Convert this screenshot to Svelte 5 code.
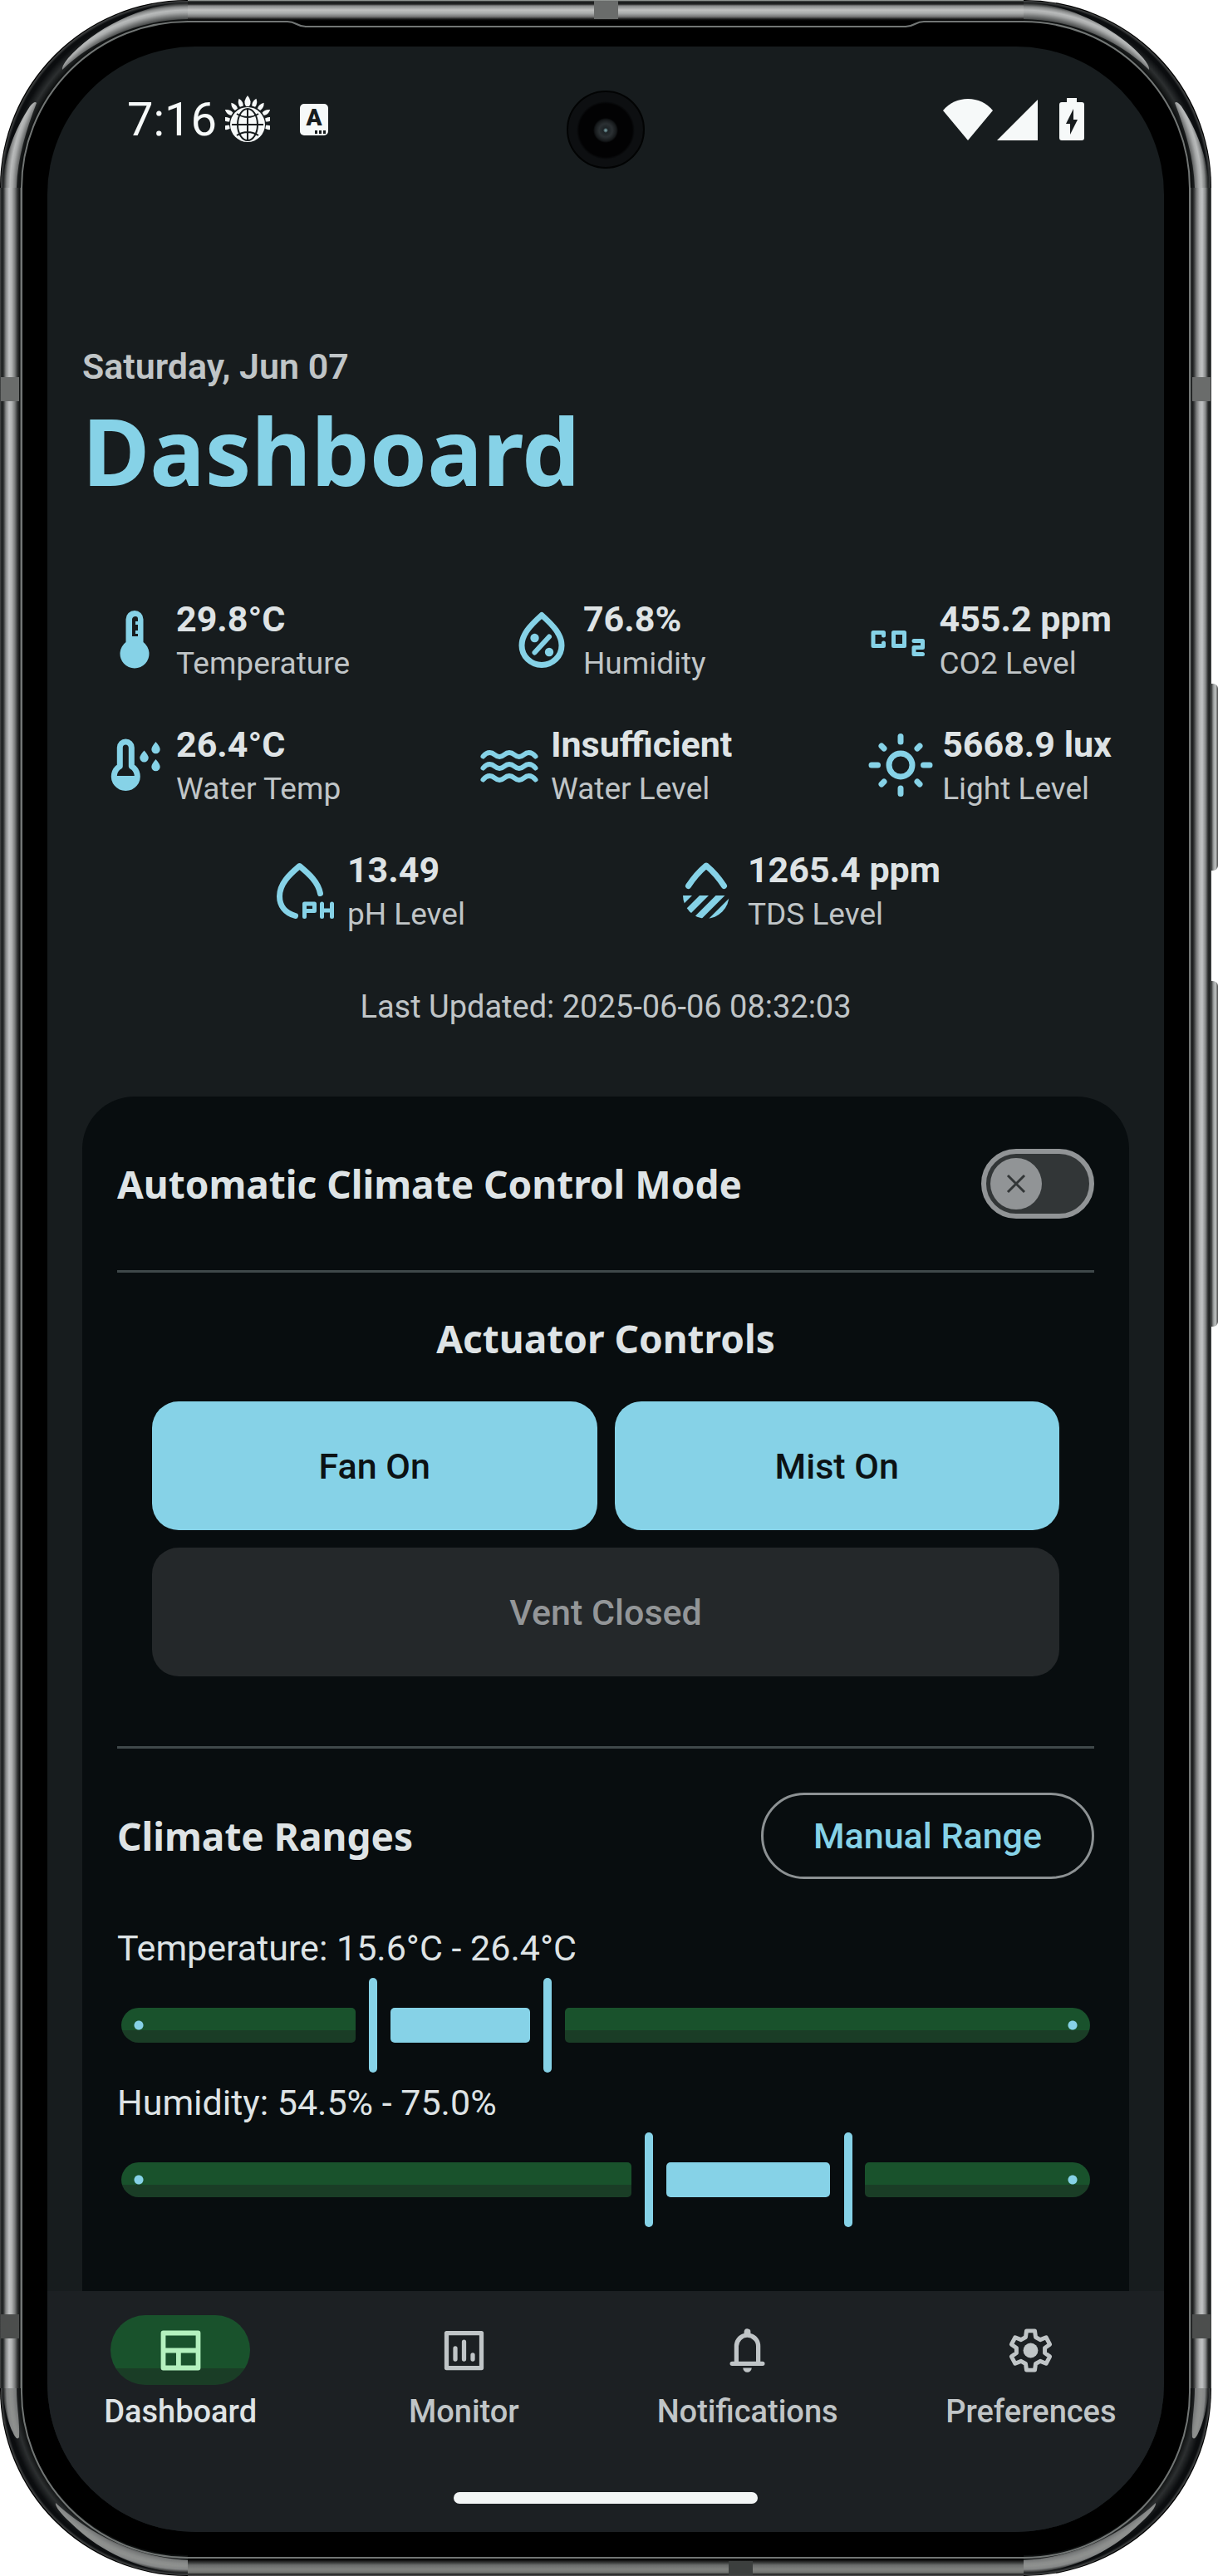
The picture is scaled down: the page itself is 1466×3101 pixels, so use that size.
<script>
  let automatic = $state(false);
  let active = $state('Dashboard');
  let ranges = $state([
    { name: 'Temperature', unit: '°C', max: 60, lo: 15.6, hi: 26.4 },
    { name: 'Humidity', unit: '%', max: 100, lo: 54.5, hi: 75 }
  ]);

  const statRows = [
    [
      { icon: 'thermometer', value: '29.8°C', label: 'Temperature' },
      { icon: 'humidity', value: '76.8%', label: 'Humidity' },
      { icon: 'co2', value: '455.2 ppm', label: 'CO2 Level' }
    ],
    [
      { icon: 'watertemp', value: '26.4°C', label: 'Water Temp' },
      { icon: 'waves', value: 'Insufficient', label: 'Water Level' },
      { icon: 'sun', value: '5668.9 lux', label: 'Light Level' }
    ],
    [
      { icon: 'ph', value: '13.49', label: 'pH Level' },
      { icon: 'tds', value: '1265.4 ppm', label: 'TDS Level' }
    ]
  ];

  const tabs = ['Dashboard', 'Monitor', 'Notifications', 'Preferences'];
  const corners = ['tl', 'tr', 'bl', 'br'];
  const leaves = [-100, -78, -58, -38, -19, 0, 19, 38, 58, 78, 100];

  const columns = (r) => {
    const a = (r.lo / r.max) * 100;
    const b = (r.hi / r.max) * 100;
    return `calc(${a}% - 21px) calc(${b - a}% - 42px) calc(${100 - b}% - 21px)`;
  };
</script>

<div class="device">
  <span class="side power"></span>
  <span class="side volume"></span>
  <div class="frame">
    <span class="edge left"></span>
    <span class="edge right"></span>
    <span class="edge top"></span>
    <span class="edge bottom"></span>
    <span class="lip"></span>
    {#each corners as c}
      <svg class="corner {c}" viewBox="0 0 368 226" aria-hidden="true">
        <defs>
          <radialGradient id="metal-{c}" gradientUnits="userSpaceOnUse" cx="226" cy="226" r="225">
            <stop offset="0.895" stop-color="#333535" />
            <stop offset="0.92" stop-color="#777979" />
            <stop offset="0.938" stop-color={c[0] === 't' ? '#a9abab' : '#8a8c8b'} />
            <stop offset="0.951" stop-color={c[0] === 't' ? '#b9bbbb' : '#8f918f'} />
            <stop offset="0.969" stop-color="#858787" />
            <stop offset="0.985" stop-color="#2a2c2c" />
          </radialGradient>
          <radialGradient id="rim-{c}" gradientUnits="userSpaceOnUse" cx="226" cy="226" r="225">
            <stop offset="0.895" stop-color="#0c0e0e" />
            <stop offset="0.93" stop-color="#2c2f30" />
            <stop offset="0.97" stop-color="#0b0d0f" />
            <stop offset="0.985" stop-color="#0b0d0f" />
            <stop offset="1" stop-color="#4a4c4c" />
          </radialGradient>
        </defs>
        <path d="M226 13A213 213 0 0 0 13 226" fill="none" stroke="url(#rim-{c})" stroke-width="24" />
        {#if c[0] === 't'}
          <path d="M226 3C170 4 112 36 82 70Q74 80 75 84C110 50 165 24 226 23Z" fill="url(#metal-{c})" />
          <path d="M3 226C4 190 18 155 36 128Q42 121 44 124C32 155 21 190 20 226Z" fill="url(#metal-{c})" />
          <path d="M26 226A200 200 0 0 1 226 26H346C357 26 357 32 368 32" fill="none" stroke="#727675" stroke-width="2" />
        {:else}
          <path d="M226 3C165 5 116 33 84 65Q66 82 67 88C108 50 165 22 226 19Z" fill="url(#metal-{c})" />
          <path d="M3 226C4 206 10 184 15 174Q20 162 23 167C24 185 20 205 20 226Z" fill="url(#metal-{c})" />
          <path d="M26 226A200 200 0 0 1 226 22H368" fill="none" stroke="#727675" stroke-width="2" />
        {/if}
      </svg>
    {/each}
    <span class="band b1"></span>
    <span class="band b2"></span>
    <span class="band b3"></span>
    <span class="band b4"></span>
    <span class="band b5"></span>
    <span class="band b6"></span>

    <div class="screen">
      <div class="status">
        <time>7:16</time>
        <svg class="globe" viewBox="0 0 54 58" aria-hidden="true">
          {#each leaves as a}
            <path d="M27 2Q31 7 29 12H25Q23 7 27 2Z" fill="#f6f9f9" transform="rotate({a} 27 34)" />
          {/each}
          <path d="M27 0Q33 7 29 13H25Q21 7 27 0Z" fill="#f6f9f9" />
          <circle cx="27" cy="35" r="21" fill="#f6f9f9" />
          <g fill="none" stroke="#171c1e" stroke-width="2">
            <path d="M27 16V54M8 35H46M14 22Q27 30 40 22M14 48Q27 40 40 48" />
            <ellipse cx="27" cy="35" rx="12" ry="19" />
          </g>
        </svg>
        <span class="ime">A<i></i></span>
        <span class="signals">
          <svg width="60" height="52" viewBox="0 0 60 52" aria-hidden="true"><path d="M30 51L0 15Q12 1 30 1T60 15Z" fill="#f6f9f9" /></svg>
          <svg width="50" height="52" viewBox="0 0 50 52" aria-hidden="true"><path d="M0 51H49V2Z" fill="#f6f9f9" /></svg>
          <svg class="battery" width="30" height="52" viewBox="0 0 30 52" aria-hidden="true">
            <path d="M9 0H21V5H27Q30 5 30 8V48Q30 51 27 51H3Q0 51 0 48V8Q0 5 3 5H9Z" fill="#f6f9f9" />
            <path d="M17 13L8 31H13V44L22 26H17Z" fill="#171c1e" />
          </svg>
        </span>
        <span class="camera"></span>
      </div>

      <main>
        <header>
          <p class="date">Saturday, Jun 07</p>
          <h1>Dashboard</h1>
        </header>

        <section class="stats" aria-label="Sensor readings">
          {#each statRows as row, i}
            <div class="row" class:even={i === 2}>
              {#each row as s}
                <div class="stat">
                  <svg width="84" height="84" viewBox="0 0 84 84" fill="none" stroke="#86d2e7" stroke-width="7" stroke-linecap="round" stroke-linejoin="round" aria-hidden="true">
                    {#if s.icon === 'thermometer'}
                      <path d="M31.5 45V17.500a10.500 10.500 0 0 1 21 0V45A17.500 17.500 0 1 1 31.500 45Z" fill="#86d2e7" stroke="none" />
                      <path d="M39 38V17Q40 14 43 14Q46 14 46 17V20H43V24H46V31H43V35H46V38Z" fill="#171c1e" stroke="none" />
                    {:else if s.icon === 'humidity'}
                      <path d="M42 12.500C28 25 18 36 18 49A24 23.500 0 0 0 66 49C66 36 56 25 42 12.500Z" />
                      <path d="M33.500 57.500L51 38.500" stroke-width="6" />
                      <circle cx="33.500" cy="40" r="5.200" fill="#86d2e7" stroke="none" />
                      <circle cx="51" cy="57" r="5.200" fill="#86d2e7" stroke="none" />
                    {:else if s.icon === 'co2'}
                      <g stroke-width="5">
                        <polyline points="24.500,37 24.500,33.500 12,33.500 12,49.500 24.500,49.500 24.500,46" />
                        <rect x="36.500" y="33.500" width="13" height="16" />
                        <polyline points="61,43.500 71.500,43.500 71.500,51.500 61,51.500 61,59.500 71.500,59.500" />
                      </g>
                    {:else if s.icon === 'watertemp'}
                      <path d="M24.300 43.500V21a7 7 0 0 1 14 0V43.500A14 14 0 1 1 24.300 43.500Z" />
                      <path d="M17 55H46A14.500 14.500 0 0 1 17 55Z" fill="#86d2e7" stroke="none" />
                      <g fill="#86d2e7" stroke="none">
                        <path d="M53.500 24.500Q58.700 30 58.700 33.300A5.200 5.200 0 0 1 48.300 33.300Q48.300 30 53.500 24.500Z" />
                        <path d="M67.500 14Q72.700 20 72.700 23A5.200 5.200 0 0 1 62.300 23Q62.300 20 67.500 14Z" />
                        <path d="M67.500 35Q72.700 41 72.700 44A5.200 5.200 0 0 1 62.300 44Q62.300 41 67.500 35Z" />
                      </g>
                    {:else if s.icon === 'waves'}
                      {#each [0, 14, 28] as dy}
                        <path stroke-width="6" transform="translate(0 {dy})" d="M10.500 31.500C12.500 29 15 27 18.500 27C24.400 27 24.400 32 30.200 32S36 27 42 27S48 32 53.800 32S59.600 27 65.500 27C69 27 71.500 29 73.500 31.500" />
                      {/each}
                    {:else if s.icon === 'sun'}
                      <circle cx="42" cy="42" r="14" />
                      <path d="M42 7.500V14M42 70V76.500M7 42H14.500M69.500 42H77M19 19L22 22M62 22L65 19M19 65L22 62M62 62L65 65" />
                    {:else if s.icon === 'ph'}
                      <path d="M59.500 45.500C57 32 46 22 34.500 12.500C22 23 10.500 34 10.500 49C10.500 60 17 69 29.500 72.500" />
                      <g stroke-width="5">
                        <rect x="40.500" y="58" width="12" height="8.500" />
                        <line x1="40.500" y1="66" x2="40.500" y2="73.500" />
                        <line x1="61.500" y1="58" x2="61.500" y2="73.500" />
                        <line x1="73.500" y1="58" x2="73.500" y2="73.500" />
                        <line x1="61.500" y1="66" x2="73.500" y2="66" />
                      </g>
                    {:else}
                      <path d="M20.500 36.500Q30 22 42 12Q54 22 63.500 36.500" />
                      <clipPath id="tds-bowl"><path d="M14 48H69.500A27.500 27.500 0 0 1 14 48Z" /></clipPath>
                      <g clip-path="url(#tds-bowl)" fill="#86d2e7" stroke="none">
                        <path d="M14 48H25L-5 78H-16ZM34 48H45L15 78H4ZM53.500 48H64.500L34.500 78H23.500ZM73 48H84L54 78H43Z" />
                      </g>
                    {/if}
                  </svg>
                  <div>
                    <strong>{s.value}</strong>
                    <span>{s.label}</span>
                  </div>
                </div>
              {/each}
            </div>
          {/each}
          <p class="updated">Last Updated: 2025-06-06 08:32:03</p>
        </section>

        <section class="card">
          <label class="mode">
            <span class="heading">Automatic Climate Control Mode</span>
            <span class="switch">
              <input type="checkbox" role="switch" bind:checked={automatic} />
              <svg width="62" height="62" viewBox="0 0 62 62" aria-hidden="true">
                <circle cx="31" cy="31" r="31" fill="#919496" />
                <path d="M21 21L41 41M41 21L21 41" stroke="#323637" stroke-width="3" />
              </svg>
            </span>
          </label>
          <hr />
          <h2 class="heading centered">Actuator Controls</h2>
          <div class="actuators">
            <button type="button">Fan On</button>
            <button type="button">Mist On</button>
            <button type="button" class="off">Vent Closed</button>
          </div>
          <hr class="second" />
          <div class="ranges-head">
            <h2 class="heading">Climate Ranges</h2>
            <button type="button" class="outlined">Manual Range</button>
          </div>
          <div class="ranges">
            {#each ranges as r}
              <p>{r.name}: {r.lo.toFixed(1)}{r.unit} - {r.hi.toFixed(1)}{r.unit}</p>
              <div class="slider">
                <div class="track" style="grid-template-columns: {columns(r)}">
                  <span class="seg start"></span>
                  <span class="seg mid"></span>
                  <span class="seg end"></span>
                </div>
                <input type="range" aria-label="{r.name} minimum" min="0" max={r.max} step="0.1" bind:value={r.lo} />
                <input type="range" aria-label="{r.name} maximum" min="0" max={r.max} step="0.1" bind:value={r.hi} />
              </div>
            {/each}
          </div>
        </section>
      </main>

      <nav>
        <div class="tabs">
          {#each tabs as t}
            <button type="button" class:active={active === t} onclick={() => (active = t)}>
              <span class="pill">
                <svg width="63" height="63" viewBox="0 0 24 24" fill="none" stroke="currentColor" stroke-width="2" stroke-linecap="round" stroke-linejoin="round" aria-hidden="true">
                  {#if t === 'Dashboard'}
                    <path d="M4 4H20V20H4ZM4 12H20M11 12V20" stroke-width="2.200" />
                  {:else if t === 'Monitor'}
                    <path d="M4 4H20V20H4ZM8 11V16M12 8V16M16 14V16" />
                  {:else if t === 'Notifications'}
                    <path fill="currentColor" stroke="none" d="M5 19Q4 19 4 18T5 17H6V10Q6 7.900 7.250 6.300T10.500 4.200V3.500Q10.500 2.900 10.900 2.400T12 2T13.100 2.400T13.500 3.500V4.200Q15.500 4.700 16.750 6.300T18 10V17H19Q20 17 20 18T19 19ZM12 22Q11.200 22 10.600 21.400T10 20H14Q14 20.800 13.400 21.400T12 22ZM8 17H16V10Q16 8.350 14.800 7.200T12 6T9.200 7.200T8 10Z" fill-rule="evenodd" />
                  {:else}
                    <path stroke-width="1.900" d="M10.100 3H13.900L14.300 5.900L16.400 7.100L19.100 6L20.800 9.200L18.500 10.900V13.100L20.800 14.800L19.100 18L16.400 16.900L14.300 18.100L13.900 21H10.100L9.700 18.100L7.600 16.900L4.900 18L3.200 14.800L5.500 13.100V10.900L3.200 9.200L4.900 6L7.600 7.100L9.700 5.900Z" />
                    <circle cx="12" cy="12" r="3.400" fill="currentColor" stroke="none" />
                  {/if}
                </svg>
              </span>
              <span>{t}</span>
            </button>
          {/each}
        </div>
        <span class="home"></span>
      </nav>
    </div>
  </div>
</div>

<style>
  :global(body) {
    background: #fff;
  }
  * {
    box-sizing: border-box;
  }
  p,
  h1,
  h2 {
    margin: 0;
  }
  button {
    border: 0;
    padding: 0;
    font: inherit;
    color: inherit;
    background: none;
    cursor: pointer;
  }
  .device {
    position: relative;
    padding-right: 8px;
    font-family: Roboto, 'Liberation Sans', sans-serif;
    color: #dee3e5;
  }
  .side {
    position: absolute;
    right: 0;
    width: 12px;
    border-radius: 0 6px 6px 0;
    background: linear-gradient(90deg, #333 0 4px, #8d9090 6px, #c4c7c6 9px, #444 12px);
  }
  .power {
    top: 823px;
    height: 225px;
  }
  .volume {
    top: 1181px;
    height: 416px;
  }
  .frame {
    position: relative;
    padding: 56px 57px 53px;
    border-radius: 225px;
    background: #000;
  }
  .edge {
    position: absolute;
  }
  .left,
  .right {
    top: 226px;
    bottom: 226px;
    width: 27px;
    background: linear-gradient(90deg, #4a4c4c 0, #1c1f1f 2px, #2a2c2c 4px, #858787 7px, #c0c2c3 11px, #b2b4b4 14px, #777979 18px, #333535 21px, #0c0e0e 24px, #727675 25px 27px);
  }
  .left {
    left: 0;
  }
  .right {
    right: 0;
    transform: scaleX(-1);
  }
  .top {
    top: 0;
    left: 226px;
    right: 226px;
    height: 25px;
    background: linear-gradient(#b5bab6 0, #1a1c1c 2px, #222 5px, #858787 7px, #c0c1c0 12px, #a9abab 16px, #777 20px, #1a1a1a 23px, #000 25px);
  }
  .bottom {
    bottom: 0;
    left: 226px;
    right: 226px;
    height: 19px;
    background: linear-gradient(#111 0, #3a3c3b 3px, #6b6d6c 6px, #80827f 11px, #70726f 15px, #222 17px, #555 19px);
  }
  .lip {
    position: absolute;
    top: 31px;
    left: 367px;
    right: 367px;
    height: 2px;
    background: #727675;
  }
  .frame::after {
    content: '';
    position: absolute;
    bottom: 21px;
    left: 367px;
    right: 367px;
    height: 2px;
    background: #727675;
  }
  .corner {
    position: absolute;
    width: 368px;
    height: 226px;
  }
  .tl {
    top: 0;
    left: 0;
  }
  .tr {
    top: 0;
    right: 0;
    transform: scaleX(-1);
  }
  .bl {
    bottom: 0;
    left: 0;
    transform: scaleY(-1);
  }
  .br {
    bottom: 0;
    right: 0;
    transform: scale(-1);
  }
  .band {
    position: absolute;
    background: #6a6c6b;
  }
  .b1,
  .b2,
  .b3,
  .b4 {
    width: 22px;
    height: 29px;
  }
  .b1 {
    top: 454px;
    left: 1px;
  }
  .b2 {
    top: 454px;
    right: 1px;
  }
  .b3 {
    bottom: 286px;
    left: 1px;
    background: #4c4e4d;
  }
  .b4 {
    bottom: 286px;
    right: 1px;
    background: #4c4e4d;
  }
  .b5 {
    top: 1px;
    left: 715px;
    width: 29px;
    height: 22px;
  }
  .b6 {
    bottom: 1px;
    right: 552px;
    width: 29px;
    height: 17px;
    background: #3c3f3e;
  }

  .screen {
    position: relative;
    border-radius: 178px;
    overflow: hidden;
    background: #171c1e;
  }
  .status {
    display: flex;
    align-items: center;
    height: 120px;
    padding: 56px 96px 0;
    color: #f6f9f9;
  }
  .status time {
    font-size: 56px;
    line-height: 64px;
  }
  .globe {
    width: 54px;
    height: 58px;
    margin-left: 10px;
  }
  .ime {
    position: relative;
    width: 34px;
    height: 38px;
    margin-left: 36px;
    border-radius: 5px;
    background: #f6f9f9;
    color: #171c1e;
    font-size: 28px;
    font-weight: 900;
    line-height: 34px;
    text-align: center;
  }
  .ime i {
    position: absolute;
    right: 2px;
    bottom: 2px;
    width: 15px;
    height: 4px;
    background: radial-gradient(circle, #171c1e 2px, transparent 2px) 0 0 / 5px 4px;
  }
  .signals {
    display: flex;
    gap: 5px;
    margin-left: auto;
  }
  .battery {
    margin-left: 20px;
  }
  .camera {
    position: absolute;
    top: 53px;
    left: 50%;
    width: 94px;
    height: 94px;
    margin-left: -47px;
    border-radius: 50%;
    border: 2px solid #020303;
    background: radial-gradient(circle at 50% 51%, #6c8f94 0 1px, #1d2326 3px, #2b3033 8px, #15181a 13px, #020203 15px 32px, #0d0f11 35px);
  }
  main {
    padding: 238px 42px 0;
  }
  .date {
    font-size: 43px;
    line-height: 54px;
    font-weight: 600;
    color: #c0c5c7;
  }
  h1 {
    margin-top: 4px;
    font-family: 'Noto Sans', sans-serif;
    font-size: 111px;
    line-height: 140px;
    font-weight: 700;
    color: #86d2e7;
  }
  .stats {
    margin-top: 104px;
    display: flex;
    flex-direction: column;
    gap: 43px;
  }
  .row {
    display: flex;
    justify-content: space-between;
  }
  .even {
    justify-content: space-evenly;
  }
  .stat {
    display: flex;
    align-items: center;
    gap: 8px;
    padding: 0 21px;
  }
  .stat strong {
    display: block;
    font-size: 43px;
    line-height: 58px;
    font-weight: 700;
  }
  .stat span {
    display: block;
    font-size: 37px;
    line-height: 50px;
    color: #c0c5c7;
  }
  .updated {
    margin-top: 18px;
    font-size: 38px;
    line-height: 50px;
    text-align: center;
    color: #c0c5c7;
  }
  .card {
    margin-top: 83px;
    padding: 63px 42px 77px;
    border-radius: 63px 63px 0 0;
    background: #080d0f;
  }
  .heading {
    font-family: 'Noto Sans', sans-serif;
    font-size: 46px;
    line-height: 60px;
    font-weight: 700;
  }
  .centered {
    text-align: center;
  }
  .mode,
  .ranges-head {
    display: flex;
    align-items: center;
    justify-content: space-between;
  }
  .switch {
    display: grid;
    align-items: center;
  }
  .switch > * {
    grid-area: 1 / 1;
  }
  .switch input {
    appearance: none;
    margin: 0;
    width: 136px;
    height: 84px;
    border: 6px solid #919496;
    border-radius: 42px;
    background: #323637;
  }
  .switch svg {
    margin-left: 11px;
    pointer-events: none;
  }
  .switch input:checked + svg {
    margin-left: 63px;
  }
  hr {
    height: 3px;
    margin: 62px 0 49px;
    border: 0;
    background: #3f484a;
  }
  hr.second {
    margin: 84px 0 53px;
  }
  .actuators {
    display: grid;
    grid-template-columns: 1fr 1fr;
    gap: 21px;
    padding: 0 42px;
    margin-top: 46px;
  }
  .actuators button {
    height: 155px;
    border-radius: 32px;
    background: #86d2e7;
    color: #0c1214;
    font-size: 43px;
    font-weight: 500;
  }
  .actuators .off {
    grid-column: 1 / -1;
    background: #24282a;
    color: #939698;
  }
  .outlined {
    height: 104px;
    padding: 0 60px;
    border: 3px solid #8c9193;
    border-radius: 52px;
    color: #86d2e7;
    font-size: 43px;
    font-weight: 500;
  }
  .ranges {
    display: flex;
    flex-direction: column;
    gap: 9px;
    margin-top: 56px;
    font-size: 43px;
    line-height: 54px;
  }
  .slider {
    display: grid;
    align-items: center;
    height: 114px;
    padding: 0 5px;
  }
  .slider > * {
    grid-area: 1 / 1;
  }
  .track {
    display: grid;
    gap: 42px;
    height: 42px;
  }
  .seg {
    border-radius: 5px;
    background: linear-gradient(#19522c 27px, #1a3d26 27px);
  }
  .start {
    border-radius: 21px 5px 5px 21px;
    background: radial-gradient(circle at 21px 21px, #86d2e7 5px, transparent 6px), linear-gradient(#19522c 27px, #1a3d26 27px);
  }
  .mid {
    background: #86d2e7;
  }
  .end {
    border-radius: 5px 21px 21px 5px;
    background: radial-gradient(circle at calc(100% - 21px) 21px, #86d2e7 5px, transparent 6px), linear-gradient(#19522c 27px, #1a3d26 27px);
  }
  .slider input {
    appearance: none;
    height: 114px;
    margin: 0 -5px;
    background: none;
    pointer-events: none;
  }
  .slider input::-webkit-slider-thumb {
    appearance: none;
    width: 10px;
    height: 114px;
    border-radius: 5px;
    background: #86d2e7;
    pointer-events: auto;
  }
  nav {
    padding: 29px 0 34px;
    background: #1c2023;
  }
  .tabs {
    display: grid;
    grid-template-columns: repeat(4, 1fr);
    gap: 21px;
  }
  .tabs button {
    display: flex;
    flex-direction: column;
    align-items: center;
    gap: 8px;
    font-size: 38px;
    line-height: 48px;
    font-weight: 500;
    color: #c0c5c7;
  }
  .tabs .active {
    color: #dee3e5;
  }
  .pill {
    display: grid;
    place-items: center;
    width: 168px;
    height: 84px;
    border-radius: 42px;
  }
  .active .pill {
    color: #b4f1be;
    background: linear-gradient(#19522c 64px, #1a3d26 64px);
  }
  .home {
    display: block;
    width: 366px;
    height: 14px;
    margin: 73px auto 0;
    border-radius: 7px;
    background: #f3f6f6;
  }
</style>
